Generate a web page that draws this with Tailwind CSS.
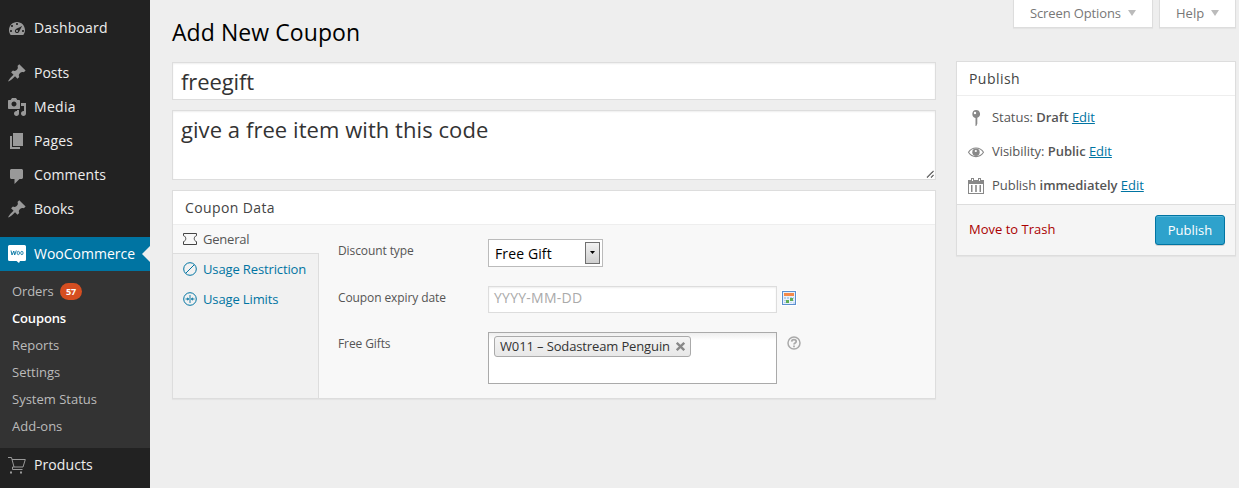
<!DOCTYPE html>
<html lang="en">
<head>
<meta charset="utf-8">
<title>Add New Coupon</title>
<script src="https://cdn.jsdelivr.net/npm/@tailwindcss/browser@4"></script>
</head>
<body class="flex h-[488px] w-[1239px] overflow-hidden bg-[#eeeeee] font-['Open_Sans',sans-serif] text-[13px] text-[#444444]">
<svg class="hidden">
  <symbol id="pin" viewBox="0 0 20 20"><path d="M10.44 3.02l1.82-1.82 6.36 6.35-1.83 1.82c-1.05-.68-2.48-.57-3.41.36l-.75.75c-.92.93-1.04 2.35-.35 3.41l-1.83 1.82-2.41-2.41-2.8 2.79c-.42.42-3.38 2.71-3.8 2.29s1.86-3.39 2.28-3.81l2.79-2.79L4.1 9.36l1.83-1.82c1.05.69 2.48.57 3.4-.36l.75-.75c.93-.92 1.05-2.35.36-3.41z"/></symbol>
</svg>

<nav class="flex w-[150px] shrink-0 flex-col bg-[#222222] pt-[11px] text-[14px] text-[#eeeeee]">
  <a class="mb-[11px] flex h-[34px] items-center gap-[7px] pl-[7px]"><svg class="size-5 fill-[#999999]" viewBox="0 0 20 20"><path fill-rule="evenodd" d="M3.76 17h12.48c1.1-1.37 1.76-3.11 1.76-5 0-4.42-3.58-8-8-8s-8 3.58-8 8c0 1.89.66 3.63 1.76 5zM9 6c0-.55.45-1 1-1s1 .45 1 1c0 .56-.45 1-1 1s-1-.44-1-1zM4 8c0-.55.45-1 1-1s1 .45 1 1c0 .56-.45 1-1 1s-1-.44-1-1zm4.52 3.4c.84-.83 6.51-3.5 6.51-3.5s-2.66 5.68-3.49 6.51c-.84.84-2.18.84-3.02 0-.83-.83-.83-2.18 0-3.01zM3 13c0-.55.45-1 1-1s1 .45 1 1c0 .56-.45 1-1 1s-1-.44-1-1zm6 0c0 .56.45 1 1 1 .56 0 1-.44 1-1 0-.55-.44-1-1-1-.55 0-1 .45-1 1zm6 0c0-.55.45-1 1-1s1 .45 1 1c0 .56-.45 1-1 1s-1-.44-1-1z"/></svg><span class="pb-0.5 tracking-[0.15px]">Dashboard</span></a>
  <a class="flex h-[34px] items-center gap-[7px] pl-[7px]"><svg class="size-5 fill-[#999999]"><use href="#pin"/></svg><span class="pb-0.5">Posts</span></a>
  <a class="flex h-[34px] items-center gap-[7px] pl-[7px]"><svg class="size-5 fill-[#999999]" viewBox="0 0 20 20"><path d="M13 11V4c0-.55-.45-1-1-1h-1.67L9 1H5L3.67 3H2c-.55 0-1 .45-1 1v7c0 .55.45 1 1 1h10c.55 0 1-.45 1-1zM7 4.500c1.380 0 2.500 1.120 2.500 2.500S8.380 9.500 7 9.500 4.500 8.380 4.500 7 5.620 4.500 7 4.500zM14 6h5v10.500c0 1.380-1.120 2.500-2.500 2.500S14 17.880 14 16.500s1.120-2.500 2.500-2.500c.17 0 .34.02.5.050V9h-3V6zm-4 8.050V13h2v3.500c0 1.380-1.120 2.500-2.500 2.500S7 17.880 7 16.500 8.120 14 9.500 14c.17 0 .34.02.5.050z"/></svg><span class="pb-0.5 tracking-[0.3px]">Media</span></a>
  <a class="flex h-[34px] items-center gap-[7px] pl-[7px]"><svg class="size-5 fill-[#999999]" viewBox="0 0 20 20"><path d="M6 15V2h10v13H6zm-1 1h8v2H3V5h2v11z"/></svg><span class="pb-0.5 tracking-[0.15px]">Pages</span></a>
  <a class="flex h-[34px] items-center gap-[7px] pl-[7px]"><svg class="size-5 fill-[#999999]" viewBox="0 0 20 20"><path d="M4.500 4h10c.8 0 1.500.7 1.500 1.500v7c0 .8-.7 1.500-1.500 1.500H12.500L7.500 19v-5h-3c-.8 0-1.500-.7-1.500-1.500v-7C3 4.700 3.700 4 4.500 4z"/></svg><span class="pb-0.5 tracking-[0.1px]">Comments</span></a>
  <a class="flex h-[34px] items-center gap-[7px] pl-[7px]"><svg class="size-5 fill-[#999999]"><use href="#pin"/></svg><span class="pb-0.5">Books</span></a>
  <a class="mt-[11px] flex h-[34px] items-center bg-[#0074a2] pl-[7px] text-white">
    <svg class="mr-[7px] size-5" viewBox="0 0 20 20"><path fill="#fff" d="M2.500 1h15A1.500 1.500 0 0 1 19 2.500v13a1.500 1.500 0 0 1-1.500 1.500H13l-1 2-2.500-2h-7A1.500 1.500 0 0 1 1 15.500v-13A1.500 1.500 0 0 1 2.500 1z"/><path fill="none" stroke="#0074a2" stroke-width=".9" d="M4 6.500l1 4.500 1.800-4 .9 4 1.600-4.500"/><ellipse cx="11.300" cy="9" rx="1.200" ry="1.700" fill="none" stroke="#0074a2" stroke-width=".8"/><ellipse cx="14.900" cy="9" rx="1.200" ry="1.700" fill="none" stroke="#0074a2" stroke-width=".8"/></svg><span class="pb-0.5">WooCommerce</span>
    <svg class="ml-auto h-4 w-2 fill-[#eeeeee]" viewBox="0 0 8 16"><path d="M8 0v16L0 8z"/></svg>
  </a>
  <div class="flex h-[177px] flex-col bg-[#333333] pt-[7px] pl-3 text-[13px] text-[#bbbbbb]">
    <a class="flex h-[27px] items-center"><span class="tracking-[-0.1px]">Orders</span><span class="ml-[6.500px] flex h-[17px] w-[22px] items-center justify-center rounded-[9px] bg-[#d54e21] text-[9px] font-bold text-white">57</span></a>
    <a class="flex h-[27px] items-center font-semibold tracking-[-0.15px] text-white">Coupons</a>
    <a class="flex h-[27px] items-center">Reports</a>
    <a class="flex h-[27px] items-center">Settings</a>
    <a class="flex h-[27px] items-center">System Status</a>
    <a class="flex h-[27px] items-center">Add-ons</a>
  </div>
  <a class="flex h-[34px] items-center gap-[7px] pl-[7px]"><svg class="size-5" viewBox="0 0 20 20" fill="none" stroke="#999999"><path d="M1 2.500h3.500l2.500 9.500M5 4.500h13.300l-2.300 7.500H5.500v2.500h10"/><path fill="#999" stroke="none" d="M3 16.500h2v2H3zM13 16.500h2v2h-2z"/></svg><span class="pb-0.5 tracking-[0.1px]">Products</span></a>
</nav>

<main class="ml-[22px] w-[764px] shrink-0 pt-[14px]">
  <h1 class="h-12 text-[23px] leading-[37px] tracking-[0.07px] text-black">Add New Coupon</h1>
  <div class="h-[38px] border border-[#dddddd] bg-white px-2 text-[22px] leading-[36px] tracking-[-0.1px] text-[#333333] shadow-[inset_0_1px_2px_rgba(0,0,0,0.07)]">freegift</div>
  <div class="mt-[10px] flex h-[70px] items-end justify-between border border-[#dddddd] bg-white pl-2 text-[22px] text-[#333333] shadow-[inset_0_1px_2px_rgba(0,0,0,0.07)]">
    <span class="self-start leading-[36px] tracking-[0.06px]">give a free item with this code</span>
    <svg class="size-[9px]" viewBox="0 0 9 9" stroke="#444" stroke-width="1.200" stroke-dasharray="1.200 .2"><path d="M1 7.500L7.500 1M5 7.500L7.500 5"/></svg>
  </div>
  <section class="mt-[10px] h-[209px] border border-[#dddddd] bg-[#f8f8f8] shadow-[0_1px_1px_rgba(0,0,0,0.04)]">
    <h2 class="h-[34px] border-b border-[#eeeeee] bg-white pl-3 text-[14px] leading-[33px] tracking-[0.38px] text-[#444444]">Coupon Data</h2>
    <div class="flex h-[173px]">
      <div class="flex w-[146px] flex-col text-[13px] tracking-[-0.13px] text-[#0074a2]">
        <a class="flex h-[28px] items-center gap-[6px] pl-[10px] text-[#555555]"><svg class="size-[14px]" viewBox="0 0 14 14" fill="none" stroke="#444"><path d="M.5 1.500h13v2.200c-3 .8-3 5.100 0 5.900v2.900H.5V9.600c3-.8 3-5.100 0-5.900z"/></svg><span class="pt-0.5 tracking-[-0.2px]">General</span></a>
        <div class="flex grow flex-col border-t border-r border-[#dddddd] bg-[#f1f1f1]">
          <a class="flex h-[30px] items-center gap-[6px] pl-[10px]"><svg class="size-[14px]" viewBox="0 0 14 14" fill="none" stroke="#0074a2"><circle cx="7" cy="7" r="6.300"/><path d="M2.800 11.200l8.400-8.400"/></svg><span class="pt-0.5">Usage Restriction</span></a>
          <a class="flex h-[30px] items-center gap-[6px] pl-[10px]"><svg class="size-[14px]" viewBox="0 0 14 14" fill="none" stroke="#0074a2"><circle cx="7" cy="7" r="6.300"/><path stroke-width=".9" d="M7 3v8M2.500 7h3M8.500 7h3"/><path fill="#0074a2" stroke="none" d="M6.200 7L4.300 5.300v3.400zM7.800 7l1.900-1.700v3.400z"/></svg><span class="pt-0.5">Usage Limits</span></a>
        </div>
      </div>
      <div class="grow pl-[19px] text-[12px] tracking-[-0.1px] text-[#555555]">
        <div class="flex pt-[14px]">
          <label class="w-[150px] leading-[24px]">Discount type</label>
          <div class="flex h-[28px] w-[115px] items-center justify-between border border-[#bbbbbb] bg-white pr-[2px] pl-[6px] text-[14px] tracking-[0.12px] text-black">Free Gift
            <span class="flex h-[22px] w-[15px] items-center justify-center border border-[#707070] bg-linear-to-b from-[#f2f2f2] to-[#cfcfcf]"><svg class="mb-0.5 h-[3px] w-[5px]" viewBox="0 0 5 3"><path d="M0 0h5L2.500 3z"/></svg></span>
          </div>
        </div>
        <div class="flex pt-[19px]">
          <label class="w-[150px] leading-[24px]">Coupon expiry date</label>
          <div class="h-[27px] w-[289px] border border-[#dddddd] bg-white pl-[5px] text-[14px] leading-[22px] tracking-[0.25px] text-[#aaaaaa] shadow-[inset_0_1px_2px_rgba(0,0,0,0.07)]">YYYY-MM-DD</div>
          <svg class="mt-1 ml-1 size-4" viewBox="0 0 16 16" shape-rendering="crispEdges"><path fill="#fff" d="M0 0h16v16H0z"/><path fill="#5b8fcf" d="M1 1h14v14H1z"/><path fill="#e9f1fb" d="M2 2h12v12H2z"/><path fill="#f58a4b" d="M3 3h10v3H3z"/><path fill="#b5cdea" d="M3 7h2v2H3zM6 7h2v2H6zM9 7h2v1H9zM12 7h1v2h-1zM3 10h2v1H3zM12 10h1v1h-1zM3 12h2v1H3z"/><path fill="#5fae57" d="M5 10h3v3H5zM9 8h3v3H9z"/><path fill="#c7dcf3" d="M9 12h2v1H9zM12 12h2v2h-2z"/></svg>
        </div>
        <div class="flex pt-[19px]">
          <label class="w-[150px] leading-[24px]">Free Gifts</label>
          <div class="h-[52px] w-[289px] border border-[#aaaaaa] bg-linear-to-b from-[#eeeeee] to-white to-[15%] pt-[3px] pl-[5px]">
            <div class="flex h-[21px] w-[197px] items-center rounded-[3px] border border-[#aaaaaa] bg-linear-to-b from-[#f4f4f4] to-[#e8e8e8] pl-[5px] text-[13px] text-[#333333]"><span class="w-[176px] whitespace-nowrap tracking-[-0.13px]">W011 – Sodastream Penguin</span><svg class="size-[9px]" viewBox="0 0 9 9" stroke="#888" stroke-width="2.300"><path d="M.8.8l7.400 7.400M8.200.8L.8 8.200"/></svg></div>
          </div>
          <svg class="mt-1 ml-[10px] size-[14px]" viewBox="0 0 14 14" fill="none" stroke="#aaa" stroke-width="1.500"><circle cx="7" cy="7" r="6"/><path stroke-width="1.700" d="M4.700 5.600c.1-2.600 4.500-2.500 4.500 0 0 1.500-2.200 1.200-2.200 2.900M7 9.500v1.700"/></svg>
        </div>
      </div>
    </div>
  </section>
</main>

<aside class="ml-5 w-[280px] shrink-0">
  <div class="flex h-[28px] justify-end gap-[6px] text-[13px] text-[#777777]">
    <a class="flex w-[140px] items-center gap-[7px] border border-t-0 border-[#dddddd] bg-white pl-4 tracking-[-0.12px] shadow-[0_1px_1px_rgba(0,0,0,0.04)]">Screen Options<svg class="mb-0.5 h-[6px] w-[8px] fill-[#bbbbbb]" viewBox="0 0 8 6"><path d="M0 0h8L4 6z"/></svg></a>
    <a class="flex w-[77px] items-center gap-[7px] border border-t-0 border-[#dddddd] bg-white pl-4 shadow-[0_1px_1px_rgba(0,0,0,0.04)]">Help<svg class="mb-0.5 h-[6px] w-[8px] fill-[#bbbbbb]" viewBox="0 0 8 6"><path d="M0 0h8L4 6z"/></svg></a>
  </div>
  <section class="mt-[33px] h-[195px] border border-[#dddddd] bg-white shadow-[0_1px_1px_rgba(0,0,0,0.04)]">
    <h2 class="h-[34px] border-b border-[#eeeeee] pl-3 text-[14px] leading-[34px] tracking-[0.45px]">Publish</h2>
    <div class="flex h-[108px] flex-col pt-[5px] pl-[9px] text-[13px] tracking-[-0.04px] text-[#555555]">
      <p class="flex h-[34px] items-center gap-[6px]"><svg class="size-5 fill-[#888888]" viewBox="0 0 20 20"><path fill-rule="evenodd" d="M10 2a4 4 0 0 1 1.300 7.800v6L10.300 18H9.500V9.900A4 4 0 0 1 10 2zM9 3.800a1.200 1.200 0 1 0 0 2.400A1.200 1.200 0 0 0 9 3.800z"/></svg><span>Status: <b class="font-semibold">Draft</b> <a class="text-[#0074a2] underline">Edit</a></span></p>
      <p class="flex h-[34px] items-center gap-[6px]"><svg class="size-5" viewBox="0 0 20 20"><path fill="none" stroke="#888" stroke-width="1.100" d="M2.500 10.300C6 4.500 14 4.500 17.500 10.300C14 16 6 16 2.500 10.300z"/><circle cx="10" cy="10.200" r="3.700" fill="#888"/><circle cx="9.800" cy="9" r="1.100" fill="#fff"/></svg><span>Visibility: <b class="font-semibold">Public</b> <a class="text-[#0074a2] underline">Edit</a></span></p>
      <p class="flex h-[34px] items-center gap-[6px]"><svg class="size-5 fill-[#888888]" viewBox="0 0 20 20"><path fill-rule="evenodd" d="M2 4h3V2h3v2h4V2h3v2h3v14H2zM6 3v2h1V3zM13 3v2h1V3zM3 8v9h14V8z"/><path d="M5 9h1.500v7H5zM9.200 9h1.600v7H9.200zM13.500 9H15v7h-1.500z"/></svg><span>Publish <b class="font-semibold">immediately</b> <a class="text-[#0074a2] underline">Edit</a></span></p>
    </div>
    <div class="flex h-[51px] items-center justify-between border-t border-[#dddddd] bg-[#f5f5f5] pr-[10px] pl-3"><a class="text-[13px] text-[#aa0000]">Move to Trash</a><button class="h-[30px] w-[70px] rounded-[3px] border border-[#0074a2] bg-[#2ea2cc] pt-px text-[13px] font-medium text-white shadow-[inset_0_1px_0_rgba(120,200,230,0.5),0_1px_0_rgba(0,0,0,0.15)]">Publish</button></div>
  </section>
</aside>
</body>
</html>
